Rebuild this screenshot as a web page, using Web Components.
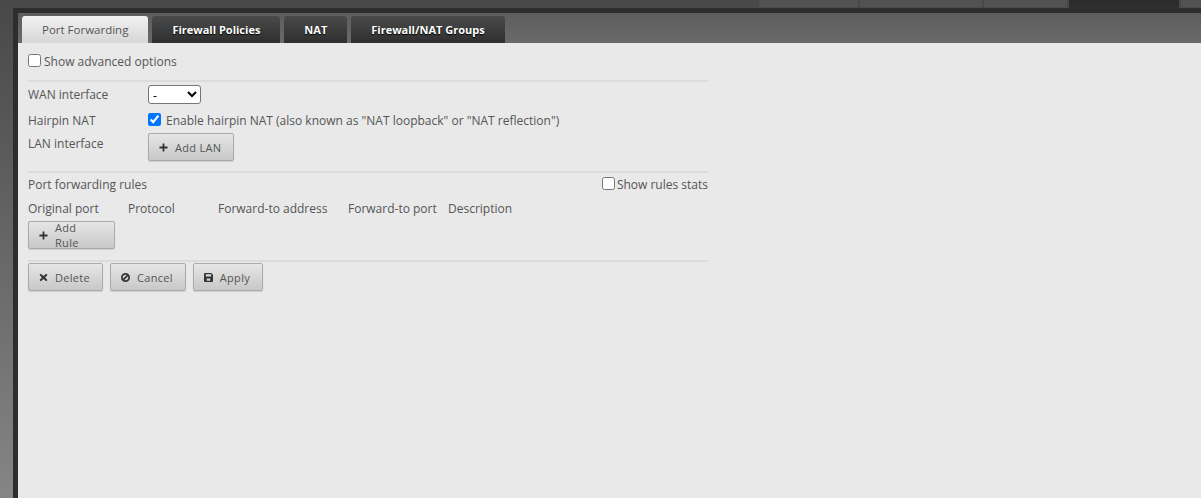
<!DOCTYPE html>
<html>
<head>
<meta charset="utf-8">
<style>
  html, body { margin: 0; height: 100%; overflow: hidden; }
  body {
    background: linear-gradient(#484848, #858585);
    font: 12px "Open Sans", sans-serif;
    color: #555;
  }
</style>
</head>
<body>
<template id="tpl-page">
  <style>
    :host { display: flex; flex-direction: column; height: 498px; box-sizing: border-box; }
    .top { display: flex; height: 8px; flex: none; justify-content: flex-end; gap: 2px; }
    .frame {
      flex: 1; display: flex; flex-direction: column;
      margin-left: 13px; border: solid #2d2d2d; border-width: 5px 0 0 5px;
      background: linear-gradient(#5d5d5d, #6a6a6a 30px);
    }
    .panel { flex: 1; background: #e9e9e9; padding: 8px 10px; }
    .content { width: 680px; }
  </style>
  <div class="top"><slot name="top"></slot></div>
  <div class="frame">
    <slot name="tabs"></slot>
    <div class="panel"><div class="content"><slot></slot></div></div>
  </div>
</template>

<template id="tpl-toptab">
  <style>
    :host { display: block; position: relative; height: 8px; background: #525252; box-shadow: inset 0 -1px #4a4a4a; }
    :host([active]) { background: linear-gradient(#2b2b2b, #303030); box-shadow: none; }
    i { position: absolute; top: 0; background: #e8e8e8; }
  </style>
  <slot></slot>
</template>

<template id="tpl-tabs">
  <style>
    :host { display: flex; gap: 4px; padding: 3px 0 0 4px; height: 27px; flex: none; }
  </style>
  <slot></slot>
</template>

<template id="tpl-tab">
  <style>
    :host {
      display: block; padding: 0 20px; line-height: 27px;
      border-radius: 3px 3px 0 0;
      background: linear-gradient(#4a4a4a, #2f2f2f);
      color: #fff; font-weight: 700; font-size: 11px;
      text-shadow: 0 1px 1px #000;
    }
    :host([active]) {
      background: linear-gradient(#f2f2f2, #d6d6d6);
      color: #555; font-weight: 400; text-shadow: none; font-size: 11.5px;
    }
  </style>
  <slot></slot>
</template>

<template id="tpl-section">
  <style>
    :host { display: block; border-top: 2px solid #dcdcdc; }
  </style>
  <slot></slot>
</template>

<template id="tpl-row">
  <style>
    :host { display: flex; align-items: flex-start; }
    .label { width: 120px; flex: none; }
  </style>
  <div class="label"><slot name="label"></slot></div>
  <slot></slot>
</template>

<template id="tpl-check">
  <style>
    :host { display: inline-flex; align-items: center; }
    input { margin: 0 var(--check-gap, 3px) 2px 0; width: 13px; height: 13px; }
  </style>
  <input type="checkbox"><slot></slot>
</template>

<template id="tpl-btn">
  <style>
    :host {
      display: inline-flex; align-items: center; gap: 7px; box-sizing: border-box;
      height: 28px; padding: 0 12px 0 10px;
      border: 1px solid #aaa; border-radius: 2px;
      background: linear-gradient(#e6e6e6, #c8c8c8);
      box-shadow: 0 1px 1px rgba(0,0,0,.12);
      color: #555; font-size: 11px; letter-spacing: .3px;
      vertical-align: top;
    }
    svg { width: 9px; height: 9px; fill: #333; flex: none; }
  </style>
  <svg viewBox="0 0 10 10"><path id="ico"></path></svg><slot></slot>
</template>

<script>
class BaseEl extends HTMLElement {
  constructor(tpl) {
    super();
    const root = this.attachShadow({ mode: 'open' });
    root.appendChild(document.getElementById(tpl).content.cloneNode(true));
  }
}
const iconos = {
  plus: 'M4 0.5h2v3.5h3.5v2H6v3.5H4V6H0.5V4H4z',
  x: 'M2 .8L5 3.4 8 .8 9.4 2.2 6.8 5 9.4 7.8 8 9.2 5 6.6 2 9.2 .6 7.8 3.2 5 .6 2.2z',
  ban: 'M5 0a5 5 0 1 0 0 10A5 5 0 0 0 5 0zM5 2c.5 0 1 .1 1.4.3L2.3 6.4A3 3 0 0 1 5 2zM5 8c-.5 0-1-.1-1.4-.3l4.1-4.1A3 3 0 0 1 5 8z',
  save: 'M1 0h7l2 2v7a1 1 0 0 1-1 1H1a1 1 0 0 1-1-1V1a1 1 0 0 1 1-1zM2 1.5v2.5h6V1.5zM3 6v2.5h4V6z'
};
class ResPage extends BaseEl { constructor() { super('tpl-page'); } }
class ResTopTab extends BaseEl { constructor() { super('tpl-toptab'); } }
class ResTabs extends BaseEl { constructor() { super('tpl-tabs'); } }
class ResTab extends BaseEl { constructor() { super('tpl-tab'); } }
class ResSection extends BaseEl { constructor() { super('tpl-section'); } }
class ResRow extends BaseEl { constructor() { super('tpl-row'); } }
class ResCheck extends BaseEl {
  constructor() { super('tpl-check'); }
  connectedCallback() {
    this.shadowRoot.querySelector('input').checked = this.hasAttribute('checked');
  }
}
class ResBtn extends BaseEl {
  constructor() { super('tpl-btn'); }
  connectedCallback() {
    this.shadowRoot.getElementById('ico').setAttribute('d', iconos[this.getAttribute('icon')]);
  }
}
customElements.define('res-page', ResPage);
customElements.define('res-toptab', ResTopTab);
customElements.define('res-tabs', ResTabs);
customElements.define('res-tab', ResTab);
customElements.define('res-section', ResSection);
customElements.define('res-row', ResRow);
customElements.define('res-check', ResCheck);
customElements.define('res-btn', ResBtn);
</script>

<res-page>
  <res-toptab slot="top" style="width:99px"></res-toptab>
  <res-toptab slot="top" style="width:122px"></res-toptab>
  <res-toptab slot="top" style="width:83px"></res-toptab>
  <res-toptab slot="top" active style="width:110px"></res-toptab>
  <res-toptab slot="top" style="width:20px"></res-toptab>

  <res-tabs slot="tabs">
    <res-tab active>Port Forwarding</res-tab>
    <res-tab>Firewall Policies</res-tab>
    <res-tab>NAT</res-tab>
    <res-tab>Firewall/NAT Groups</res-tab>
  </res-tabs>

  <div style="height:20px;margin-bottom:9px;display:flex;align-items:center"><res-check>Show advanced options</res-check></div>

  <res-section>
    <res-row style="height:24px;align-items:center">
      <span slot="label">WAN interface</span>
      <select style="width:53px;height:19px;font:12px 'Open Sans',sans-serif;background:#fff;border:1px solid #767676;border-radius:3px;color:#000"><option>-</option></select>
    </res-row>
    <res-row style="height:26px;margin-top:1px;align-items:center;--check-gap:5px">
      <span slot="label">Hairpin NAT</span>
      <res-check checked>Enable hairpin NAT (also known as "NAT loopback" or "NAT reflection")</res-check>
    </res-row>
    <res-row style="height:37px">
      <span slot="label" style="line-height:20px;display:block;margin-top:1px">LAN interface</span>
      <res-btn icon="plus">Add LAN</res-btn>
    </res-row>
  </res-section>

  <res-section style="margin-top:1px">
    <div style="display:flex;justify-content:space-between;align-items:center;height:22px;--check-gap:2px">
      <span>Port forwarding rules</span>
      <res-check>Show rules stats</res-check>
    </div>
    <div style="display:flex;height:26px;align-items:center">
      <span style="width:100px">Original port</span>
      <span style="width:90px">Protocol</span>
      <span style="width:130px">Forward-to address</span>
      <span style="width:100px">Forward-to port</span>
      <span>Description</span>
    </div>
    <res-btn icon="plus" style="display:flex;width:87px">Add Rule</res-btn>
  </res-section>

  <res-section style="margin-top:11px;padding-top:1px;display:flex;gap:8px">
    <res-btn icon="x" style="margin-right:-1px">Delete</res-btn>
    <res-btn icon="ban">Cancel</res-btn>
    <res-btn icon="save" style="margin-left:-1px">Apply</res-btn>
  </res-section>
</res-page>
</body>
</html>
